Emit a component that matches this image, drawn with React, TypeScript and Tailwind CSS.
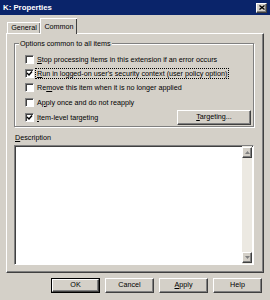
import type { ReactNode } from "react";

const font = { fontFamily: '"Liberation Sans", Arial, sans-serif' };

function Check({ checked }: { checked?: boolean }) {
    return (
        <span className="flex size-[9px] shrink-0 items-center justify-center border border-t-[#808080] border-l-[#808080] border-b-white border-r-white bg-white shadow-[inset_1px_1px_0_#404040]">
            {checked && (
                <svg width="7" height="7" viewBox="0 0 7 7">
                    <path d="M1 3 L3 5 L6 1.5" stroke="#000" strokeWidth="1.4" fill="none" />
                </svg>
            )}
        </span>
    );
}

function Row({ checked, children, focus }: { checked?: boolean; children: ReactNode; focus?: boolean }) {
    return (
        <div className="flex h-[14.4px] items-center gap-[2px]">
            <Check checked={checked} />
            <span className={"px-[1px] leading-[9px] " + (focus ? "outline outline-1 outline-dotted outline-black" : "")}>{children}</span>
        </div>
    );
}

function Btn({ children, def, w = "w-[49px]" }: { children: ReactNode; def?: boolean; w?: string }) {
    return (
        <div className={`${w} h-[15px] ${def ? "border border-black" : ""}`}>
            <div className="flex h-full w-full items-center justify-center border border-t-white border-l-white border-b-[#404040] border-r-[#404040] bg-[#d4d0c8] shadow-[inset_-1px_-1px_0_#808080]">
                {children}
            </div>
        </div>
    );
}

function ScrollArrow({ up }: { up?: boolean }) {
    return (
        <div className="flex h-[11px] w-[10px] items-center justify-center border border-t-white border-l-white border-b-[#404040] border-r-[#404040] bg-[#d4d0c8] shadow-[inset_-1px_-1px_0_#808080]">
            <svg width="5" height="3" viewBox="0 0 5 3">
                <path d={up ? "M0 3 L2.5 0 L5 3 Z" : "M0 0 L2.5 3 L5 0 Z"} fill="#808080" />
            </svg>
        </div>
    );
}

export default function App() {
    return (
        <div className="flex h-[300px] w-[270px] flex-col overflow-hidden bg-[#d4d0c8] text-[7.2px] text-black" style={font}>
            <div className="flex h-[15px] shrink-0 items-center justify-between bg-[#0a246a] pl-[3px] pr-[3px]">
                <span className="text-[7.8px] font-bold text-white">K: Properties</span>
                <div className="flex h-[10px] w-[11px] items-center justify-center border border-t-white border-l-white border-b-[#404040] border-r-[#404040] bg-[#d4d0c8] shadow-[inset_-1px_-1px_0_#808080]">
                    <svg width="6" height="5" viewBox="0 0 6 5">
                        <path d="M0.5 0.5 L5.5 4.5 M5.5 0.5 L0.5 4.5" stroke="#000" strokeWidth="1.3" />
                    </svg>
                </div>
            </div>

            <div className="flex h-[18px] shrink-0 items-end pl-[7px]">
                <div className="flex h-[11px] w-[33px] items-center justify-center border-l border-t border-white pt-[1px] shadow-[inset_-1px_0_0_#808080]">
                    General
                </div>
                <div className="relative z-10 -mb-[1px] flex h-[16px] w-[37px] items-start justify-center border-l border-t border-white bg-[#d4d0c8] pt-[3px] shadow-[inset_-1px_0_0_#404040]">
                    Common
                </div>
            </div>

            <div className="ml-[6px] flex h-[240px] w-[258px] shrink-0 flex-col border border-t-white border-l-white border-b-[#404040] border-r-[#404040] shadow-[inset_-1px_-1px_0_#808080]">
                <div className="relative ml-[7px] mt-[9px] h-[84px] w-[240px] border border-[#808080] shadow-[inset_1px_1px_0_#fff,1px_1px_0_#fff]">
                    <span className="absolute -top-[5px] left-[4px] bg-[#d4d0c8] px-[1px] leading-[9px]">Options common to all items</span>
                    <div className="flex flex-col pl-[10px] pt-[8px]">
                        <Row>
                            <u>S</u>top processing items in this extension if an error occurs
                        </Row>
                        <Row checked focus>
                            <u>R</u>un in logged-on user's security context (user policy option)
                        </Row>
                        <Row>
                            Re<u>m</u>ove this item when it is no longer applied
                        </Row>
                        <Row>
                            A<u>p</u>ply once and do not reapply
                        </Row>
                        <div className="flex items-center justify-between pr-[2px]">
                            <Row checked>
                                <u>I</u>tem-level targeting
                            </Row>
                            <Btn w="w-[74px]">
                                <span>
                                    <u>T</u>argeting...
                                </span>
                            </Btn>
                        </div>
                    </div>
                </div>

                <div className="ml-[8px] mt-[6px] leading-[9px]">
                    <u>D</u>escription
                </div>
                <div className="ml-[7px] mt-[3px] flex h-[120px] w-[240px] border border-t-[#808080] border-l-[#808080] border-b-white border-r-white bg-white shadow-[inset_1px_1px_0_#404040]">
                    <div className="flex-1" />
                    <div className="mr-[1px] flex w-[10px] flex-col justify-between bg-[#ece9e2] pb-[1px] pt-[1px]">
                        <ScrollArrow up />
                        <ScrollArrow />
                    </div>
                </div>
            </div>

            <div className="ml-[51px] mt-[5px] flex gap-[5px]">
                <Btn def>OK</Btn>
                <Btn>Cancel</Btn>
                <Btn>
                    <span>
                        <u>A</u>pply
                    </span>
                </Btn>
                <Btn>Help</Btn>
            </div>
        </div>
    );
}
